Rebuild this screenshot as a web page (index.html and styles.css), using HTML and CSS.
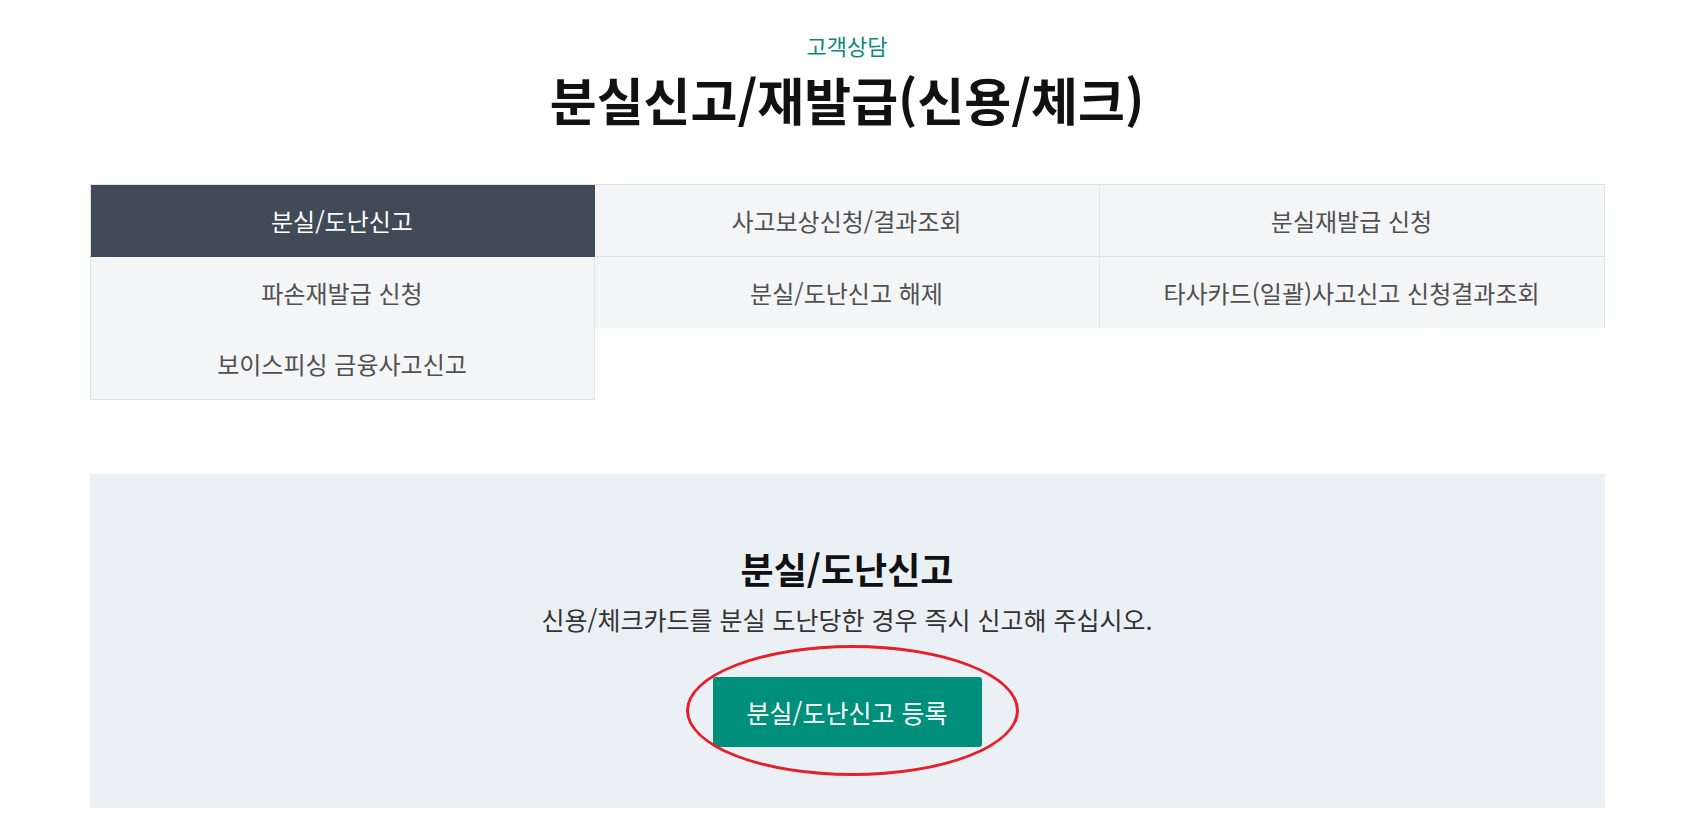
FILE: index.html
```html
<!DOCTYPE html>
<html lang="ko">
<head>
<meta charset="utf-8">
<title>분실신고/재발급(신용/체크)</title>
<link rel="stylesheet" href="styles.css">
</head>
<body>
<div class="page">
  <header class="head">
    <p class="eyebrow">고객상담</p>
    <h1 class="title">분실신고/재발급(신용/체크)</h1>
  </header>

  <nav class="tabs">
    <a class="tab tab-active">분실/도난신고</a>
    <a class="tab">사고보상신청/결과조회</a>
    <a class="tab">분실재발급 신청</a>
    <a class="tab">파손재발급 신청</a>
    <a class="tab">분실/도난신고 해제</a>
    <a class="tab">타사카드(일괄)사고신고 신청결과조회</a>
    <a class="tab">보이스피싱 금융사고신고</a>
  </nav>

  <section class="panel">
    <h2 class="panel-title">분실/도난신고</h2>
    <p class="panel-desc">신용/체크카드를 분실 도난당한 경우 즉시 신고해 주십시오.</p>
    <div class="action">
      <button class="btn">분실/도난신고 등록</button>
      <span class="mark"></span>
    </div>
  </section>
</div>
</body>
</html>
```

FILE: styles.css
```css
* { box-sizing: border-box; }
html, body { margin: 0; padding: 0; background: #fff; }
body {
  font-family: "Noto Sans CJK KR", "Noto Sans", sans-serif;
  color: #111;
}
.page {
  width: 1515px;
  margin: 0 auto;
}
.head {
  display: flex;
  flex-direction: column;
  align-items: center;
  padding-top: 31px;
}
.eyebrow {
  margin: 0;
  font-size: 22px;
  line-height: 28px;
  color: #0b8a78;
}
.title {
  margin: 10px 0 0;
  font-size: 51px;
  line-height: 60px;
  font-weight: 700;
  color: #111;
}
.tabs {
  display: grid;
  grid-template-columns: repeat(3, 1fr);
  margin-top: 55px;
  border-top: 1px solid #e1e2e4;
  width: 1515px;
}
.tab {
  display: flex;
  align-items: center;
  justify-content: center;
  height: 72px;
  background: #f4f5f7;
  border-right: 1px solid #e1e2e4;
  border-bottom: 1px solid #e1e2e4;
  font-size: 24px;
  color: #505050;
  text-decoration: none;
}
.tabs .tab:nth-child(3n+1) { border-left: 1px solid #e1e2e4; }
.tabs .tab:nth-child(4),
.tabs .tab:nth-child(5),
.tabs .tab:nth-child(6) { border-bottom: 0; height: 71px; }
.tab-active {
  background: #414b58;
  color: #fff;
  border-color: #414b58;
}
.tabs .tab-active { border-left-color: #414b58; }

.panel {
  position: relative;
  margin-top: 74px;
  background: #ebf0f4;
  display: flex;
  flex-direction: column;
  align-items: center;
  padding: 74px 0 61px;
}
.panel-title {
  margin: 0;
  font-size: 36px;
  line-height: 40px;
  font-weight: 700;
  color: #111;
}
.panel-desc {
  margin: 15px 0 0;
  font-size: 25px;
  line-height: 32px;
  color: #333;
}
.action {
  position: relative;
  margin-top: 42px;
}
.btn {
  display: block;
  width: 269px;
  height: 70px;
  border: 0;
  border-radius: 3px;
  background: #008f7b;
  color: #fff;
  font-family: "Noto Sans CJK KR", "Noto Sans", sans-serif;
  font-size: 25px;
  padding: 0;
}
.mark {
  position: absolute;
  left: -27px;
  top: -32px;
  width: 333px;
  height: 131px;
  border: 3px solid #e51f2b;
  border-radius: 50%;
  pointer-events: none;
}
```
